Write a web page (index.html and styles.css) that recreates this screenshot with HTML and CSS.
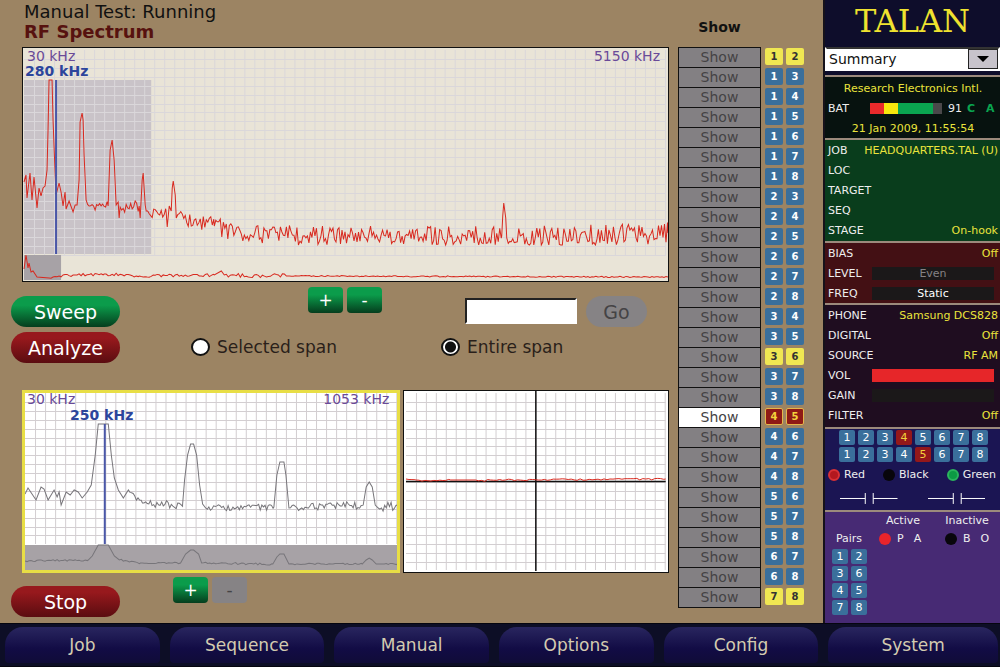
FILE: index.html
```html
<!DOCTYPE html>
<html lang="en">
<head>
    <meta charset="UTF-8">
    <meta name="viewport" content="width=device-width, initial-scale=1.0">
    <title>TALAN - RF Spectrum</title>
    <link rel="stylesheet" href="styles.css">
</head>
<body>
    <div class="screen">
        <main class="workspace">
            <header class="heading">
                <p>Manual Test: Running</p>
                <h1>RF Spectrum</h1>
            </header>

            <div class="chart chart-main">
                <svg viewBox="24 48 644 233" preserveAspectRatio="none">
                    <rect class="selection" x="25" y="80" width="127" height="174"/>
                    <path class="grid" id="grid-main"/>
                    <rect class="overview" x="25" y="255" width="37" height="25"/>
                    <path class="trace red" id="trace-main"/>
                    <path class="trace red" id="overview-main"/>
                    <path class="marker" d="M57 80V254"/>
                </svg>
                <span class="label start">30 kHz</span>
                <span class="label cursor">280 kHz</span>
                <span class="label end">5150 kHz</span>
            </div>

            <div class="controls">
                <div class="actions">
                    <button class="pill green">Sweep</button>
                    <button class="pill red">Analyze</button>
                </div>
                <div class="options">
                    <div class="options-top">
                        <div class="zoom">
                            <button class="square">+</button>
                            <button class="square">-</button>
                        </div>
                        <form class="go">
                            <input type="text" class="frequency" aria-label="Frequency">
                            <button type="button" class="pill disabled" disabled>Go</button>
                        </form>
                    </div>
                    <div class="spans">
                        <label><input type="radio" name="span"> Selected span</label>
                        <label><input type="radio" name="span" checked> Entire span</label>
                    </div>
                </div>
            </div>

            <div class="charts">
                <div class="chart chart-span">
                    <svg viewBox="25 393 371 177" preserveAspectRatio="none">
                        <path class="grid dark" id="grid-span"/>
                        <rect class="overview" x="25" y="545" width="371" height="25"/>
                        <path class="trace gray" id="trace-span"/>
                        <path class="trace gray" id="overview-span"/>
                        <path class="marker" d="M104.500 424V544"/>
                    </svg>
                    <span class="label start">30 kHz</span>
                    <span class="label cursor">250 kHz</span>
                    <span class="label end">1053 kHz</span>
                </div>
                <div class="chart chart-time">
                    <svg viewBox="403 391 265 181" preserveAspectRatio="none">
                        <path class="grid dark" id="grid-time"/>
                        <path class="axis" d="M405 481.500H666M535.500 391V571"/>
                        <path class="trace red" id="trace-time"/>
                    </svg>
                </div>
            </div>

            <div class="bottom">
                <button class="pill red">Stop</button>
                <div class="zoom">
                    <button class="square">+</button>
                    <button class="square disabled" disabled>-</button>
                </div>
            </div>
        </main>

        <section class="show">
            <h2>Show</h2>
            <div id="show-list"></div>
        </section>

        <aside class="sidebar">
            <div class="logo">TALAN</div>
            <div class="select">
                <select aria-label="View">
                    <option>Summary</option>
                </select>
                <span class="arrow"><svg viewBox="0 0 12 6"><path d="M0 0H12L6 6Z"/></svg></span>
            </div>

            <div class="panel status">
                <div class="row center"><b>Research Electronics Intl.</b></div>
                <div class="row battery">
                    <span>BAT</span>
                    <span class="meter"><i class="low"></i><i class="mid"></i><i class="high"></i></span>
                    <span>91</span><span class="flag">C</span><span class="flag">A</span>
                </div>
                <div class="row center"><b>21 Jan 2009, 11:55:54</b></div>
            </div>

            <div class="panel job">
                <div class="row"><span>JOB</span><b>HEADQUARTERS.TAL (U)</b></div>
                <div class="row"><span>LOC</span></div>
                <div class="row"><span>TARGET</span></div>
                <div class="row"><span>SEQ</span></div>
                <div class="row"><span>STAGE</span><b>On-hook</b></div>
            </div>

            <div class="panel bias">
                <div class="row"><span>BIAS</span><b>Off</b></div>
                <div class="row"><span>LEVEL</span><span class="bar dim">Even</span></div>
                <div class="row"><span>FREQ</span><span class="bar">Static</span></div>
            </div>

            <div class="panel phone">
                <div class="row"><span>PHONE</span><b>Samsung DCS828</b></div>
                <div class="row"><span>DIGITAL</span><b>Off</b></div>
                <div class="row"><span>SOURCE</span><b>RF AM</b></div>
                <div class="row"><span>VOL</span><span class="bar full"></span></div>
                <div class="row"><span>GAIN</span><span class="bar"></span></div>
                <div class="row"><span>FILTER</span><b>Off</b></div>
            </div>

            <div class="panel wires">
                <div class="chips">
                    <i>1</i><i>2</i><i>3</i><i class="on">4</i><i>5</i><i>6</i><i>7</i><i>8</i>
                    <i>1</i><i>2</i><i>3</i><i>4</i><i class="on">5</i><i>6</i><i>7</i><i>8</i>
                </div>
                <div class="legend">
                    <span><em class="dot darkred"></em>Red</span>
                    <span><em class="dot black"></em>Black</span>
                    <span><em class="dot green"></em>Green</span>
                </div>
                <div class="capacitors">
                    <svg viewBox="0 0 58 12"><path d="M0 6.500H25.500M33.500 6.500H58M25.500 1V12M33.500 1V12"/></svg>
                    <svg viewBox="0 0 58 12"><path d="M0 6.500H25.500M33.500 6.500H58M25.500 1V12M33.500 1V12"/></svg>
                </div>
            </div>

            <div class="panel pairs">
                <div class="pairs-head">
                    <span></span><span>Active</span><span>Inactive</span>
                    <span>Pairs</span>
                    <span class="keys"><em class="dot red"></em>P<span>A</span></span>
                    <span class="keys"><em class="dot black"></em>B<span>O</span></span>
                </div>
                <div class="chips two">
                    <i>1</i><i>2</i><i>3</i><i>6</i><i>4</i><i>5</i><i>7</i><i>8</i>
                </div>
            </div>
        </aside>
    </div>

    <nav class="tabs">
        <button>Job</button>
        <button>Sequence</button>
        <button>Manual</button>
        <button>Options</button>
        <button>Config</button>
        <button>System</button>
    </nav>

    <script src="script.js"></script>
</body>
</html>
```
FILE: styles.css
```css
* {
    box-sizing: border-box;
}
body {
    margin: 0;
    min-height: 100vh;
    display: flex;
    flex-direction: column;
    background-color: #9c8463;
    font-family: "DejaVu Sans", Verdana, sans-serif;
    color: #111;
}
button {
    font-family: inherit;
    padding: 0;
    border: none;
    cursor: pointer;
}
h1, h2, p {
    margin: 0;
}
.screen {
    flex: 1;
    display: flex;
}

/* Workspace */
.workspace {
    flex: 1;
    padding: 2px 0 0 11px;
}
.heading {
    padding: 0 0 5px 13px;
    font-size: 18px;
    line-height: 20px;
}
.heading h1 {
    font-size: 18px;
    color: #57120f;
}
.chart {
    position: relative;
    border: 1px solid #111;
    background-color: #fff;
}
.chart svg {
    display: block;
    width: 100%;
    height: 100%;
}
.chart-main {
    height: 235px;
    margin-left: 11px;
    background-color: #e9e4d7;
}
.grid {
    fill: none;
    stroke: #d6d2d6;
}
.grid.dark {
    stroke: #d3ced1;
}
.selection {
    fill: #c9c3c8;
}
.selection + .grid {
    stroke: #dad7da;
}
.overview {
    fill: #a7a2a6;
}
.trace {
    fill: none;
    stroke-width: 1;
}
.trace.red {
    stroke: #d8291f;
}
.trace.gray {
    stroke: #77757a;
}
.marker {
    stroke: #4a57a8;
    stroke-width: 2;
}
.axis {
    stroke: #111;
    stroke-width: 1.5;
}
.label {
    position: absolute;
    top: 0;
    font-size: 14px;
    line-height: 16px;
    color: #6a4a98;
}
.label.start {
    left: 4px;
}
.label.end {
    right: 8px;
}
.label.cursor {
    top: 15px;
    left: 2px;
    font-weight: bold;
    color: #2c459c;
}
.controls {
    display: flex;
    height: 108px;
}
.actions {
    padding-top: 14px;
    display: flex;
    flex-direction: column;
    gap: 5px;
}
.pill {
    width: 109px;
    height: 31px;
    border-radius: 16px;
    font-size: 19px;
    color: #fff;
}
.pill.green, .square {
    background: linear-gradient(#0b9c4b 30%, #053d1d);
}
.pill.red {
    background: linear-gradient(#97191d 20%, #5a0c10);
}
.pill.disabled, .square.disabled {
    background: #868385;
    color: #454345;
}
.options {
    flex: 1;
}
.options-top {
    display: flex;
    height: 53px;
    padding: 5px 22px 0 188px;
    justify-content: space-between;
}
.zoom {
    display: flex;
    gap: 4px;
}
.square {
    width: 35px;
    height: 26px;
    border-radius: 4px;
    font-size: 17px;
    color: #fff;
}
.go {
    display: flex;
    gap: 9px;
    padding-top: 9px;
}
.go .pill {
    width: 61px;
}
.frequency {
    width: 112px;
    height: 26px;
    margin-top: 2px;
    border: 2px solid;
    border-color: #222 #fff #fff #222;
    background-color: #fff;
    font-size: 16px;
}
.spans {
    display: grid;
    grid-template-columns: 250px 1fr;
    padding-left: 71px;
    font-size: 17px;
    line-height: 24px;
    color: #2a1f1a;
}
.spans label {
    display: flex;
    align-items: center;
    gap: 7px;
}
.spans input {
    appearance: none;
    width: 19px;
    height: 18px;
    margin: 0;
    border: 2px solid #111;
    border-radius: 50%;
    background-color: #fff;
}
.spans input:checked {
    background: radial-gradient(circle, #111 5px, #fff 6px);
}
.charts {
    display: flex;
    gap: 3px;
    margin-left: 11px;
}
.chart-span {
    flex: 377;
    height: 183px;
    border: 3px solid #e8de45;
}
.chart-span .label {
    top: -2px;
}
.chart-span .label.start {
    left: 2px;
}
.chart-span .label.cursor {
    left: 45px;
    top: 14px;
}
.chart-time {
    flex: 267;
}
.bottom {
    display: flex;
    align-items: flex-start;
    gap: 53px;
    padding-top: 4px;
}
.bottom .pill {
    margin-top: 9px;
}

/* Show list */
.show {
    width: 154px;
    padding: 17px 0 0 9px;
}
.show h2 {
    width: 83px;
    padding-bottom: 10px;
    font-size: 14px;
    line-height: 20px;
    text-align: center;
}
.show-row {
    display: flex;
    align-items: flex-start;
    gap: 3px;
    height: 20px;
}
.show-row button {
    width: 83px;
    height: 21px;
    margin-right: 1px;
    padding-bottom: 2px;
    border: 1px solid #111;
    background-color: #838083;
    font-size: 14px;
    color: #454345;
}
.show-row.on button {
    background-color: #fff;
}
.show-row i, .chips i {
    border-radius: 2px;
    background-color: #3a6f9b;
    font-style: normal;
    text-align: center;
    color: #fff;
}
.show-row i {
    width: 18px;
    height: 17px;
    margin-top: 1px;
    font-size: 10px;
    font-weight: bold;
    line-height: 17px;
}
.show-row.pair i {
    background-color: #f0e752;
    color: #333;
}
.show-row.on i {
    border: 1px solid #e6b64a;
    background-color: #8f1a15;
    color: #f3d23c;
    line-height: 15px;
}

/* Sidebar */
.sidebar {
    width: 177px;
    display: flex;
    flex-direction: column;
    border-left: 2px solid #16121a;
    background-color: #0e0d2b;
    font-size: 11px;
    color: #eee;
}
.logo {
    height: 47px;
    font-family: "DejaVu Serif", serif;
    font-size: 32px;
    line-height: 42px;
    text-align: center;
    color: #efe22f;
}
.select {
    position: relative;
    height: 24px;
    margin-bottom: 4px;
}
.select select {
    appearance: none;
    width: 100%;
    height: 24px;
    padding: 0 2px;
    border: 2px solid #fff;
    border-top-color: #333;
    border-radius: 0;
    background-color: #fff;
    font-family: inherit;
    font-size: 14px;
    color: #111;
}
.arrow {
    position: absolute;
    top: 2px;
    right: 2px;
    width: 30px;
    height: 20px;
    border: 1px solid #222;
    background-color: #c7c3cb;
    pointer-events: none;
    display: flex;
    align-items: center;
    justify-content: center;
}
.arrow svg {
    width: 12px;
    height: 6px;
}
.panel {
    border-top: 2px solid #9c8a7c;
}
.row {
    display: flex;
    align-items: center;
    justify-content: space-between;
    height: 20px;
    padding: 0 2px 0 3px;
}
.row b {
    font-weight: normal;
    color: #eae43c;
}
.row.center {
    justify-content: center;
}
.status {
    padding-top: 1px;
    background-color: #07120f;
}
.battery {
    justify-content: flex-start;
}
.meter {
    display: flex;
    width: 72px;
    height: 11px;
    margin: 0 6px 0 21px;
    background-color: #4a484a;
}
.meter i {
    width: 14px;
}
.meter .low {
    background-color: #e92a2b;
}
.meter .mid {
    background-color: #f7e70d;
}
.meter .high {
    width: 35px;
    background-color: #0aa550;
}
.flag {
    margin-left: 5px;
    font-weight: bold;
    color: #0aa550;
}
.flag + .flag {
    margin-left: 11px;
}
.job {
    padding-bottom: 1px;
    background-color: #093d1c;
}
.bias {
    background-color: #431014;
}
.phone {
    padding-bottom: 2px;
    background-color: #1f0d20;
}
.bar {
    width: 122px;
    height: 13px;
    margin-right: 4px;
    background-color: #1b1819;
    line-height: 13px;
    text-align: center;
    color: #fff;
}
.bar.dim {
    color: #858285;
}
.bar.full {
    background-color: #e62629;
}
.wires {
    height: 83px;
    background-color: #1b1553;
}
.chips {
    display: grid;
    grid-template-columns: repeat(8, 16px);
    gap: 2px 3px;
    padding: 1px 0 0 14px;
}
.chips i {
    height: 15px;
    line-height: 15px;
}
.chips .on {
    background-color: #94181a;
    color: #f3d23c;
}
.legend {
    display: flex;
    justify-content: space-between;
    padding: 4px 4px 0 3px;
    line-height: 18px;
}
.legend span, .keys {
    display: flex;
    align-items: center;
}
.dot {
    width: 12px;
    height: 12px;
    margin-right: 4px;
    border-radius: 50%;
}
.dot.darkred {
    border: 2px solid #d93035;
    background-color: #b3181f;
}
.dot.red {
    background-color: #e8242b;
}
.dot.black {
    background-color: #08060c;
}
.dot.green {
    border: 2px solid #2bb45d;
    background-color: #0c9a44;
}
.capacitors {
    display: flex;
    gap: 30px;
    padding: 8px 15px;
}
.capacitors svg {
    width: 58px;
    height: 12px;
    fill: none;
    stroke: #fff;
}
.pairs {
    flex: 1;
    background-color: #472a74;
}
.pairs-head {
    display: grid;
    grid-template-columns: 48px 60px 68px;
    line-height: 18px;
    text-align: center;
}
.keys {
    padding-left: 6px;
}
.keys:last-child {
    padding-left: 12px;
}
.keys .dot {
    margin-right: 6px;
}
.keys span {
    margin-left: 10px;
}
.chips.two {
    grid-template-columns: repeat(2, 16px);
    padding-left: 7px;
}

/* Bottom tabs */
.tabs {
    display: grid;
    grid-template-columns: repeat(5, 31fr) 34fr;
    gap: 10px;
    height: 44px;
    padding: 3px 2px 3px 5px;
    border: solid #05050f;
    border-width: 1px 0;
    background-color: #0d0e26;
}
.tabs button {
    border-radius: 18px 18px 4px 4px;
    background: linear-gradient(#29265f, #120c45 60%, #100c38);
    font-size: 17px;
    color: #d3cbb0;
}
```
FILE: script.js
```js
// Repeatable noise, so the sweep looks the same on every load
function makeNoise(seed) {
    return function () {
        seed = (seed * 16807) % 2147483647;
        return (seed / 2147483647) * 2 - 1;
    };
}

// points: [x, y, noise amplitude up to the next point]
function trace(id, points, floor, step) {
    const noise = makeNoise(id.length * 7919);
    let d = 'M' + points[0][0] + ' ' + points[0][1];
    for (let i = 1; i < points.length; i++) {
        const a = points[i - 1];
        const b = points[i];
        if (a[2]) {
            for (let x = a[0] + step; x < b[0]; x += step) {
                const y = a[1] + (b[1] - a[1]) * (x - a[0]) / (b[0] - a[0]) + noise() * a[2];
                d += 'L' + x.toFixed(1) + ' ' + Math.min(y, floor).toFixed(1);
            }
        }
        d += 'L' + b[0] + ' ' + b[1];
    }
    document.getElementById(id).setAttribute('d', d);
}

function grid(id, left, top, right, bottom) {
    let d = '';
    for (let x = left + 10; x <= right; x += 10) {
        d += 'M' + (x + 0.5) + ' ' + top + 'V' + bottom;
    }
    for (let y = top + 9; y <= bottom; y += 8.9) {
        d += 'M' + left + ' ' + (Math.round(y) + 0.5) + 'H' + right;
    }
    document.getElementById(id).setAttribute('d', d);
}

grid('grid-main', 25, 50, 666, 255);
grid('grid-span', 25, 393, 396, 544);
grid('grid-time', 405, 393, 666, 570);

trace('trace-main', [
    [25, 182], [27, 175], [28, 198], [31, 173], [33, 200], [35, 177], [38, 208], [40, 188],
    [42, 196], [44, 188], [46, 186], [48, 170], [49, 130], [50, 80], [53, 80], [54, 120],
    [56, 172], [57, 195], [60, 183], [62, 192], [64, 206], [66, 192], [67, 209], [70, 201],
    [74, 212], [76, 205], [78, 205], [80, 180], [81, 122], [83, 113], [84, 120], [85, 155],
    [87, 200, 6], [90, 206, 6], [109, 206], [111, 150], [113, 140], [115, 160], [117, 205],
    [119, 202], [120, 218], [121, 207, 6], [140, 206], [141, 218], [143, 180], [144, 173],
    [146, 205], [147, 211, 6], [167, 213], [168, 227], [170, 206], [172, 211], [173, 188],
    [174, 181], [176, 195], [177, 218, 7], [195, 220, 10], [215, 226, 9], [245, 235, 10],
    [502, 236], [503, 216], [504, 203], [506, 218], [507, 238, 11], [668, 233]
], 245, 1.5);

trace('overview-main', [
    [25, 269], [27, 255], [29, 268], [30, 263], [32, 272], [34, 271], [38, 277], [50, 278, 1],
    [60, 276, 1.5], [105, 274, 1.5], [140, 276, 1.5], [215, 275], [222, 271], [225, 275, 2],
    [290, 276, 0.6], [668, 277]
], 279, 2);

trace('trace-span', [
    [25, 494], [28, 488], [32, 494], [36, 500], [41, 487], [44, 489], [48, 500], [54, 490],
    [57, 497], [59, 492], [61, 505], [66, 492], [70, 495], [74, 490], [78, 492], [82, 498],
    [87, 492], [91, 485], [95, 455], [98, 424], [108, 424], [111, 455], [114, 478], [118, 490],
    [123, 498], [128, 490, 4], [142, 503, 4], [182, 505], [184, 480], [187, 455], [190, 444],
    [193, 444], [196, 455], [199, 485], [202, 504], [205, 508, 3], [273, 507], [276, 475],
    [279, 462], [283, 462], [285, 475], [288, 508, 4], [362, 505], [365, 487], [368, 482],
    [371, 487], [374, 505], [377, 508, 5], [396, 505]
], 513, 1.6);

trace('overview-span', [
    [25, 561, 1], [88, 560], [92, 556], [98, 545], [108, 545], [114, 556], [119, 560, 1],
    [140, 563, 0.7], [180, 563], [185, 554], [190, 550], [193, 550], [198, 554], [201, 563, 1],
    [272, 564], [276, 557], [279, 554], [283, 554], [288, 564, 0.7], [361, 564], [365, 560],
    [368, 558], [371, 560], [375, 564, 0.7], [396, 564]
], 566, 2);

trace('trace-time', [
    [405, 479, 1], [415, 480, 1], [430, 481, 1], [450, 480], [475, 480, 1.5], [490, 480, 0.8],
    [666, 479]
], 482, 3);

// One row for every combination of two wires
const list = document.getElementById('show-list');
const matched = ['12', '36', '78'];
for (let a = 1; a < 8; a++) {
    for (let b = a + 1; b <= 8; b++) {
        const row = document.createElement('div');
        const pair = '' + a + b;
        row.className = 'show-row' + (matched.includes(pair) ? ' pair' : '') + (pair === '45' ? ' on' : '');
        row.innerHTML = `<button>Show</button><i>${a}</i><i>${b}</i>`;
        list.appendChild(row);
    }
}
```
